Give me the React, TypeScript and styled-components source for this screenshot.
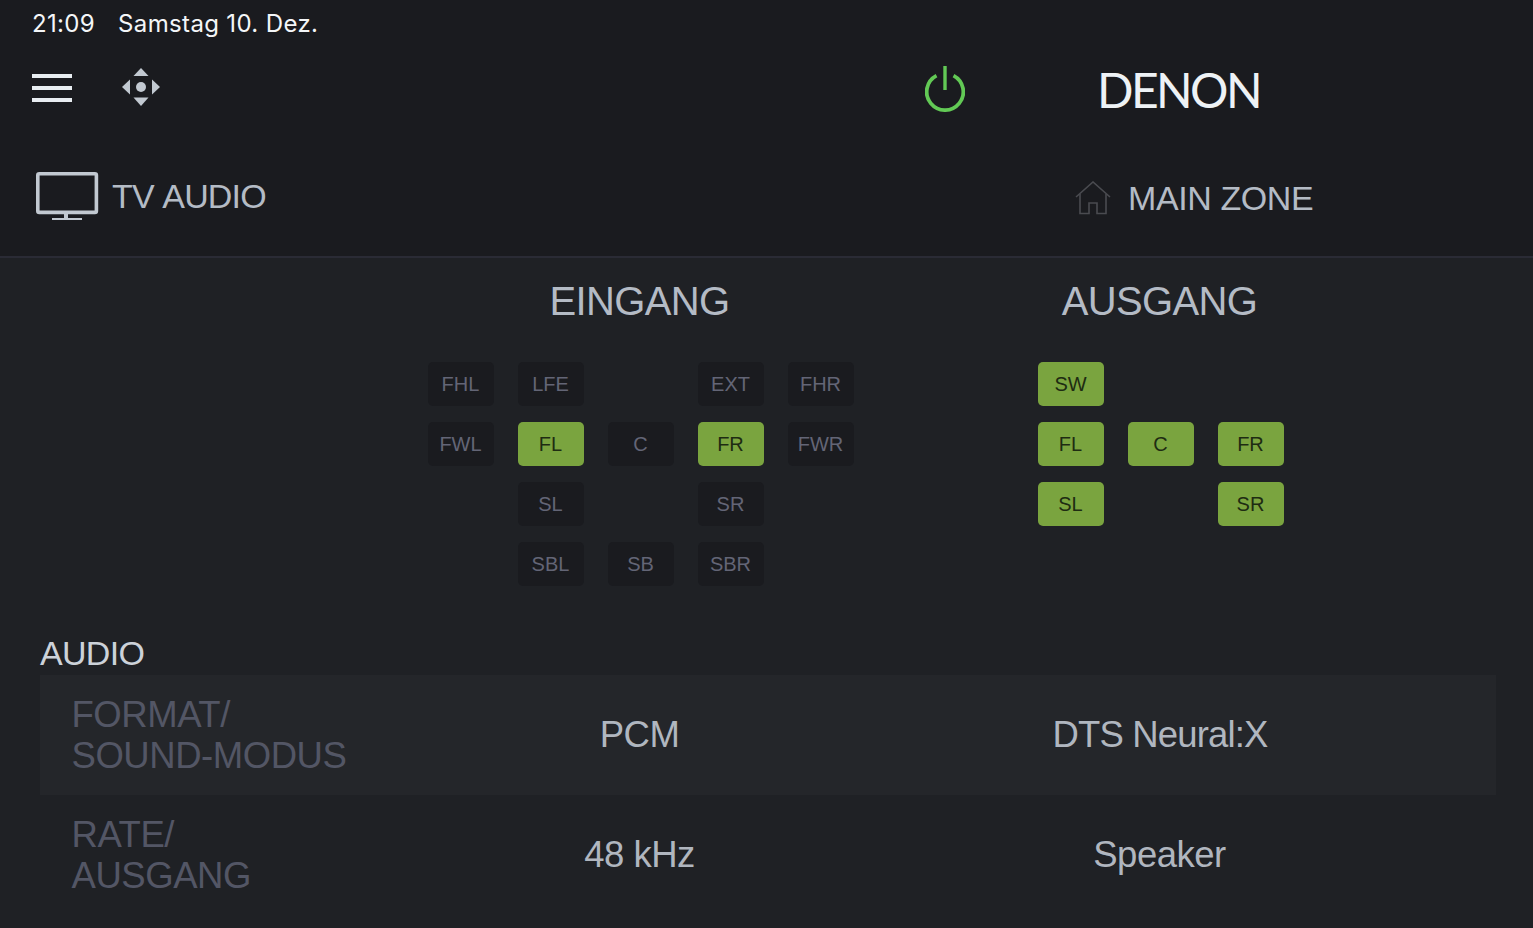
import React from "react";
import styled, { createGlobalStyle } from "styled-components";

const Global = createGlobalStyle`
  html, body { margin: 0; padding: 0; background: #1f2125; }
  * { box-sizing: border-box; }
`;

const Page = styled.div`
  width: 1533px;
  height: 928px;
  overflow: hidden;
  display: flex;
  flex-direction: column;
  background: #1f2125;
  font-family: "Liberation Sans", Arial, sans-serif;
`;

const Header = styled.header`
  height: 258px;
  flex: none;
  background: #1a1b1f;
  border-bottom: 2px solid #2a2b35;
`;

const StatusBar = styled.div`
  height: 47px;
  padding-left: 32px;
  display: flex;
  align-items: center;
  gap: 23px;
  font-family: Inter, sans-serif;
  font-size: 24px;
  letter-spacing: 0.35px;
  color: #f4f6f8;
`;

const Toolbar = styled.div`
  height: 46px;
  margin-top: 19px;
  padding-left: 32px;
  display: flex;
  align-items: flex-start;
`;

const MenuIcon = styled.svg`
  width: 40px;
  height: 28px;
  margin-top: 8px;
  flex: none;
`;

const MoveIcon = styled.svg`
  width: 38px;
  height: 38px;
  margin: 2px 0 0 50px;
  flex: none;
`;

const PowerIcon = styled.svg`
  width: 40px;
  height: 46px;
  margin-left: 765px;
  flex: none;
`;

const Logo = styled.div`
  margin: -1px 0 0 132px;
  font-family: Lato, sans-serif;
  font-size: 48px;
  line-height: 50px;
  height: 50px;
  letter-spacing: -2.6px;
  color: #eef2f5;
`;

const SourceRow = styled.div`
  margin-top: 60px;
  padding-left: 36px;
  display: flex;
  align-items: flex-start;
`;

const SourceGroup = styled.div`
  width: 1039px;
  flex: none;
  display: flex;
  align-items: center;
  gap: 13px;
  height: 48px;
`;

const ZoneGroup = styled.div`
  display: flex;
  align-items: center;
  gap: 17px;
  height: 48px;
  margin-top: 2px;
`;

const SourceLabel = styled.span<{ $spacing: number }>`
  font-size: 34px;
  font-kerning: none;
  letter-spacing: ${(p) => p.$spacing}px;
  color: #b4bbc5;
`;

const Channels = styled.section`
  flex: none;
  height: 381px;
  padding: 21px 0 0 428px;
  display: flex;
  align-items: flex-start;
`;

const Panel = styled.div<{ $width: number; $gap?: number }>`
  width: ${(p) => p.$width}px;
  margin-left: ${(p) => p.$gap ?? 0}px;
  flex: none;
  display: flex;
  flex-direction: column;
  align-items: center;
  gap: 39px;
`;

const PanelTitle = styled.h2`
  margin: 0;
  height: 44px;
  line-height: 44px;
  padding-right: 3px;
  font-size: 40px;
  font-weight: 400;
  letter-spacing: -0.65px;
  color: #b4bbc5;
  white-space: nowrap;
`;

const SpeakerGrid = styled.div<{ $cols: number }>`
  display: grid;
  grid-template-columns: repeat(${(p) => p.$cols}, 66px);
  grid-auto-rows: 44px;
  gap: 16px 24px;
  align-self: flex-start;
`;

const Speaker = styled.div<{ $on?: boolean; $col: number; $row: number }>`
  grid-column: ${(p) => p.$col};
  grid-row: ${(p) => p.$row};
  display: flex;
  align-items: center;
  justify-content: center;
  padding-right: 1px;
  border-radius: 5px;
  font-size: 20px;
  background: ${(p) => (p.$on ? "#7aa43f" : "#1a1b1f")};
  color: ${(p) => (p.$on ? "#1e2c12" : "#636576")};
`;

const AudioSection = styled.section`
  padding: 0 37px 0 40px;
`;

const AudioTitle = styled.h3`
  height: 60px;
  margin: -24px 0 0;
  padding-top: 20px;
  line-height: 36px;
  font-size: 34px;
  font-weight: 400;
  letter-spacing: -0.7px;
  color: #ccd2d9;
`;

const InfoRow = styled.div<{ $shade?: boolean }>`
  height: 120px;
  display: grid;
  grid-template-columns: 400px 400px 640px;
  align-items: center;
  background: ${(p) => (p.$shade ? "#24262a" : "transparent")};
`;

const InfoLabel = styled.div`
  padding-left: 31.5px;
  font-size: 36.5px;
  line-height: 41px;
  letter-spacing: -0.45px;
  color: #535665;
`;

const InfoValue = styled.div<{ $narrow?: boolean }>`
  padding-right: ${(p) => (p.$narrow ? 0 : 1)}px;
  text-align: center;
  font-size: 36.5px;
  letter-spacing: ${(p) => (p.$narrow ? -0.85 : -0.5)}px;
  color: #b0b6bf;
`;

type Sp = { n: string; c: number; r: number; on?: boolean };

const input: Sp[] = [
  { n: "FHL", c: 1, r: 1 }, { n: "LFE", c: 2, r: 1 }, { n: "EXT", c: 4, r: 1 }, { n: "FHR", c: 5, r: 1 },
  { n: "FWL", c: 1, r: 2 }, { n: "FL", c: 2, r: 2, on: true }, { n: "C", c: 3, r: 2 }, { n: "FR", c: 4, r: 2, on: true }, { n: "FWR", c: 5, r: 2 },
  { n: "SL", c: 2, r: 3 }, { n: "SR", c: 4, r: 3 },
  { n: "SBL", c: 2, r: 4 }, { n: "SB", c: 3, r: 4 }, { n: "SBR", c: 4, r: 4 },
];

const output: Sp[] = [
  { n: "SW", c: 1, r: 1, on: true },
  { n: "FL", c: 1, r: 2, on: true }, { n: "C", c: 2, r: 2, on: true }, { n: "FR", c: 3, r: 2, on: true },
  { n: "SL", c: 1, r: 3, on: true }, { n: "SR", c: 3, r: 3, on: true },
];

const Speakers = ({ list, cols }: { list: Sp[]; cols: number }) => (
  <SpeakerGrid $cols={cols}>
    {list.map((s) => (
      <Speaker key={s.n} $on={s.on} $col={s.c} $row={s.r}>{s.n}</Speaker>
    ))}
  </SpeakerGrid>
);

export default function App() {
  return (
    <Page>
      <Global />
      <Header>
        <StatusBar>
          <span>21:09</span>
          <span>Samstag 10. Dez.</span>
        </StatusBar>
        <Toolbar>
          <MenuIcon viewBox="0 0 40 28">
            <rect x="0" y="0" width="40" height="4" fill="#e8edf1" />
            <rect x="0" y="12" width="40" height="4" fill="#e8edf1" />
            <rect x="0" y="24" width="40" height="4" fill="#e8edf1" />
          </MenuIcon>
          <MoveIcon viewBox="0 0 38 38" fill="#c2c9d1">
            <path d="M19 0 L26.5 8 H11.5 Z" />
            <path d="M19 38 L11.5 29.5 H26.5 Z" />
            <path d="M0 19 L8 11.5 V26.5 Z" />
            <path d="M38 19 L30 11.5 V26.5 Z" />
            <circle cx="19" cy="19" r="5" />
          </MoveIcon>
          <PowerIcon viewBox="0 0 40 46" fill="none" stroke="#62c955">
            <path d="M20 0 V24" strokeWidth="3.4" />
            <path d="M11.5 9.6 A18.3 18.3 0 1 0 28.5 9.6" strokeWidth="3.8" />
          </PowerIcon>
          <Logo>DENON</Logo>
        </Toolbar>
        <SourceRow>
          <SourceGroup>
            <svg width="63" height="48" viewBox="0 0 63 48" fill="none" stroke="#c2c9d1" style={{ flex: "none" }}>
              <rect x="1.8" y="1.8" width="58.6" height="38.6" rx="1.5" strokeWidth="3.6" />
              <path d="M30 42 V46" strokeWidth="4" />
              <path d="M16 47 H46" strokeWidth="2" />
            </svg>
            <SourceLabel $spacing={-0.85}>TV AUDIO</SourceLabel>
          </SourceGroup>
          <ZoneGroup>
            <svg width="36" height="34" viewBox="0 0 36 34" fill="none" stroke="#4a4b50" strokeWidth="1.6" style={{ flex: "none" }}>
              <path d="M1 16 L18 1 L35 16" />
              <path d="M5 13 V32.5 H14 V22 H22 V32.5 H31 V13" />
            </svg>
            <SourceLabel $spacing={-0.4}>MAIN ZONE</SourceLabel>
          </ZoneGroup>
        </SourceRow>
      </Header>
      <Channels>
        <Panel $width={426}>
          <PanelTitle>EINGANG</PanelTitle>
          <Speakers list={input} cols={5} />
        </Panel>
        <Panel $width={246} $gap={184}>
          <PanelTitle>AUSGANG</PanelTitle>
          <Speakers list={output} cols={3} />
        </Panel>
      </Channels>
      <AudioSection>
        <AudioTitle>AUDIO</AudioTitle>
        <InfoRow $shade>
          <InfoLabel>FORMAT/<br />SOUND-MODUS</InfoLabel>
          <InfoValue>PCM</InfoValue>
          <InfoValue $narrow>DTS Neural:X</InfoValue>
        </InfoRow>
        <InfoRow>
          <InfoLabel>RATE/<br />AUSGANG</InfoLabel>
          <InfoValue>48 kHz</InfoValue>
          <InfoValue>Speaker</InfoValue>
        </InfoRow>
      </AudioSection>
    </Page>
  );
}
